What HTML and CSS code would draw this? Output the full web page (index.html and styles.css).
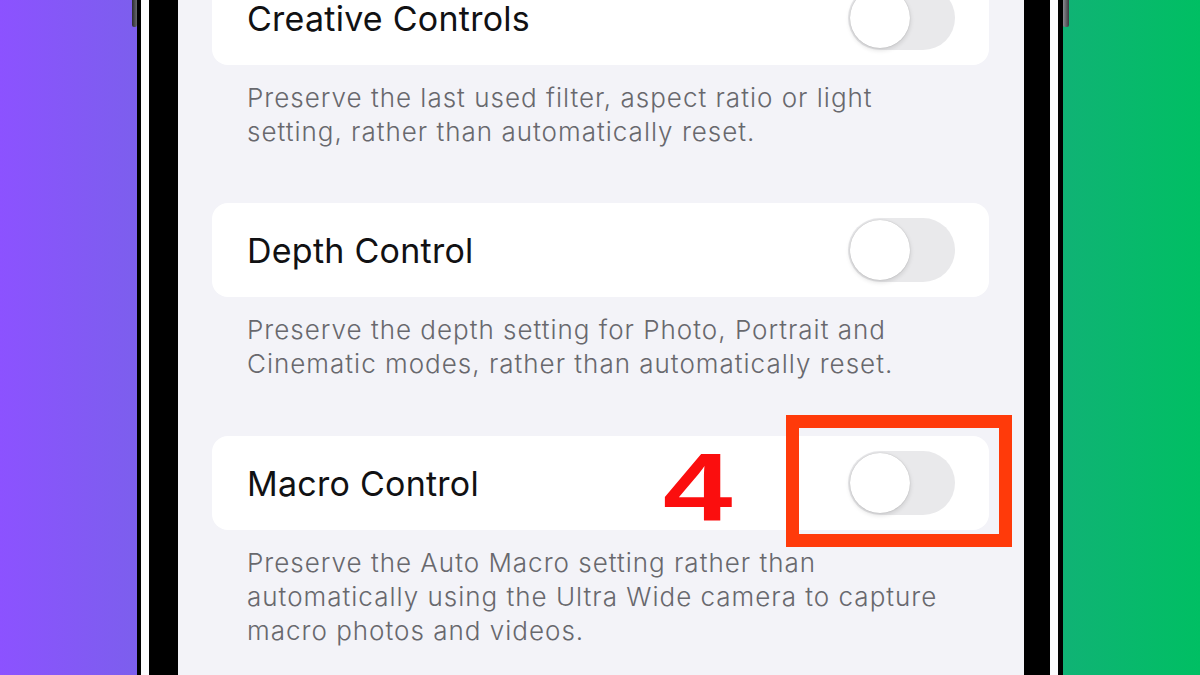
FILE: index.html
```html
<!DOCTYPE html>
<html lang="en">
<head>
<meta charset="utf-8">
<title>Camera Preserve Settings</title>
<link rel="stylesheet" href="styles.css">
</head>
<body>
  <div class="stage">
    <div class="phone">
      <div class="ring">
        <div class="bezel">
          <div class="screen">
            <div class="list">
              <div class="card first">
                <span class="title">Creative Controls</span>
                <span class="toggle"><span class="knob"></span></span>
              </div>
              <p class="desc">Preserve the last used filter, aspect ratio or light<br>setting, rather than automatically reset.</p>

              <div class="card">
                <span class="title">Depth Control</span>
                <span class="toggle"><span class="knob"></span></span>
              </div>
              <p class="desc">Preserve the depth setting for Photo, Portrait and<br>Cinematic modes, rather than automatically reset.</p>

              <div class="card marked">
                <span class="title">Macro Control</span>
                <span class="toggle"><span class="knob"></span></span>
                <span class="step">4</span>
                <span class="highlight"></span>
              </div>
              <p class="desc">Preserve the Auto Macro setting rather than<br>automatically using the Ultra Wide camera to capture<br>macro photos and videos.</p>
            </div>
          </div>
        </div>
      </div>
    </div>
  </div>
</body>
</html>
```

FILE: styles.css
```css
html, body {
  margin: 0;
  padding: 0;
  height: 100%;
}

body {
  width: 1200px;
  height: 675px;
  overflow: hidden;
  background: linear-gradient(90deg, #8c52ff 0%, #00bf63 100%);
  font-family: Inter, "Noto Sans", "Liberation Sans", sans-serif;
}

.stage {
  display: flex;
  justify-content: center;
  height: 675px;
}

.phone {
  position: relative;
  width: 926px;
  height: 675px;
  box-sizing: border-box;
  background: #000;
  border-left: 4px solid #000;
  border-right: 5px solid #000;
}

.phone::before,
.phone::after {
  content: "";
  position: absolute;
  top: 0;
  width: 5px;
  height: 27px;
  background: linear-gradient(90deg, #2a2a2e, #6a6a70);
  border-radius: 0 0 2px 2px;
}

.phone::before {
  left: -9px;
}

.phone::after {
  right: -11px;
  width: 6px;
  background: linear-gradient(90deg, #8a8a90, #3a3a3e);
}

.ring {
  height: 100%;
  box-sizing: border-box;
  border-left: 8px solid #fbfbfd;
  border-right: 8px solid #fbfbfd;
}

.bezel {
  height: 100%;
  box-sizing: border-box;
  border-left: 29px solid #000;
  border-right: 26px solid #000;
}

.screen {
  height: 100%;
  background: #f3f3f8;
  overflow: hidden;
}

.list {
  padding: 0 35px 0 34px;
}

.card {
  position: relative;
  height: 94px;
  box-sizing: border-box;
  display: flex;
  align-items: center;
  justify-content: space-between;
  padding: 0 34px 0 35px;
  background: #ffffff;
  border-radius: 16px;
}

.card.first {
  margin-top: -29px;
}

.title {
  font-size: 34px;
  color: #111113;
  letter-spacing: 0.25px;
}

.toggle {
  display: flex;
  align-items: center;
  width: 107px;
  height: 64px;
  box-sizing: border-box;
  padding: 0 2px;
  border-radius: 32px;
  background: #e9e9eb;
}

.knob {
  width: 60px;
  height: 60px;
  border-radius: 50%;
  background: #fff;
  box-shadow: 0 2px 5px rgba(0, 0, 0, 0.14), 0 0 1px rgba(0, 0, 0, 0.25);
}

.desc {
  margin: 0 0 55px;
  padding: 16px 35px 0;
  font-size: 26px;
  line-height: 34px;
  color: #68686d;
  letter-spacing: 1px;
  font-weight: 300;
  white-space: nowrap;
}

.card.first + .desc {
  margin-bottom: 54px;
}

.step {
  position: absolute;
  left: 451px;
  top: 4px;
  font-family: "Liberation Sans", Arial, sans-serif;
  font-weight: 700;
  font-size: 96px;
  line-height: 1;
  color: #fb0e0e;
  transform: scaleX(1.3);
  transform-origin: left center;
}

.highlight {
  position: absolute;
  left: 574px;
  top: -21px;
  width: 226px;
  height: 132px;
  box-sizing: border-box;
  border: 13px solid #ff3a0a;
}
```
